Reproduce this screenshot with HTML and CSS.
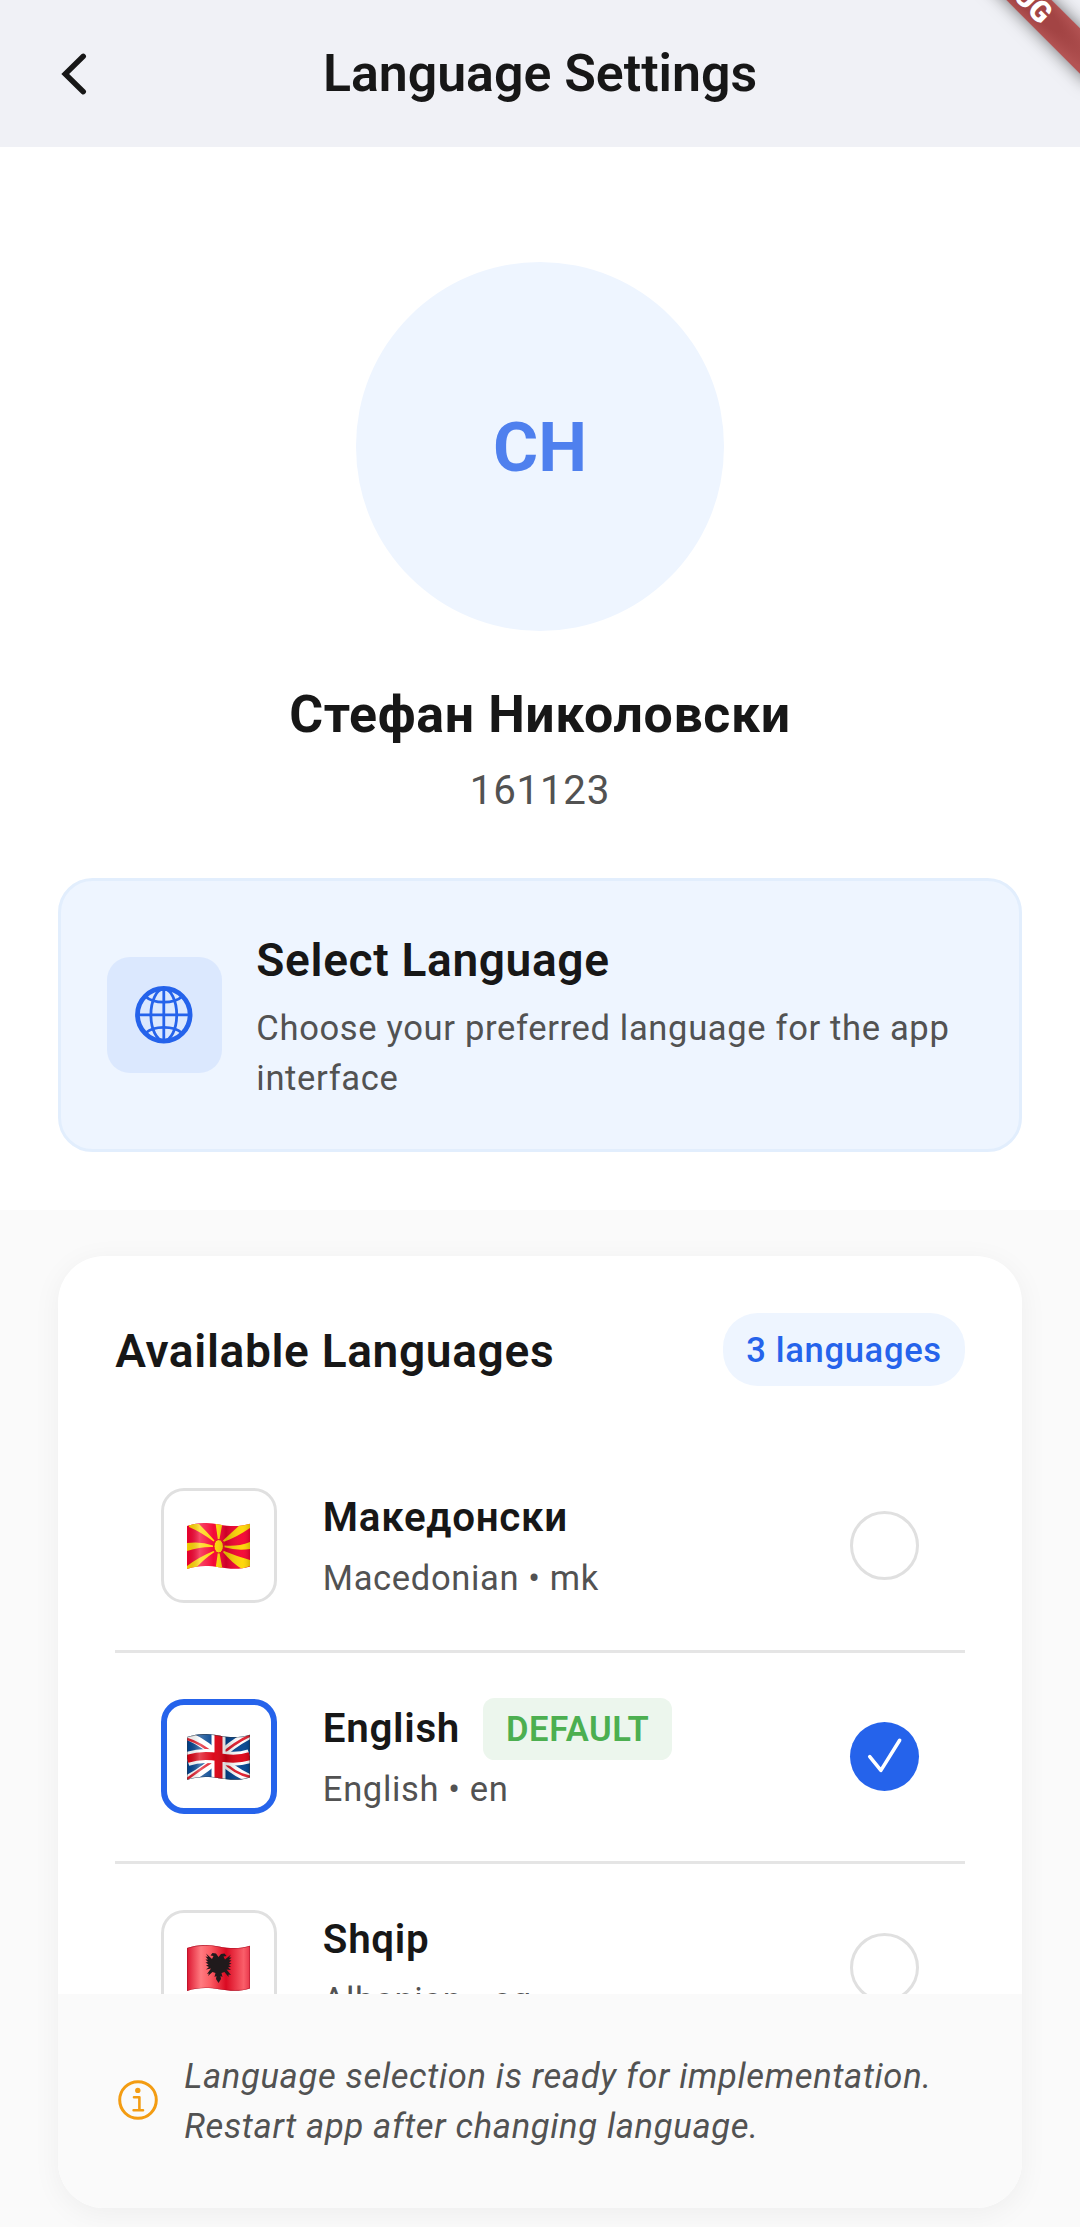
FILE: index.html
```html
<!DOCTYPE html>
<html lang="en">
<head>
<meta charset="utf-8">
<title>Language Settings</title>
<link rel="stylesheet" href="styles.css">
</head>
<body>
<div class="screen">
  <header class="app-bar">
    <svg class="back" viewBox="0 0 28 44"><path d="M23.300 4.300L5.200 22L23.300 39.700"/></svg>
    <h1 class="app-title">Language Settings</h1>
  </header>
  <div class="ribbon"><span class="ribbon-text">DEBUG</span></div>

  <section class="profile">
    <div class="avatar">CH</div>
    <h2 class="name">Стефан Николовски</h2>
    <p class="index-number">161123</p>
    <div class="intro">
      <div class="intro-icon">
        <svg class="globe" viewBox="0 0 58 58">
          <circle class="globe-ring" cx="29" cy="29" r="26.500"/>
          <path d="M29 3V55M3 29H55"/>
          <ellipse cx="29" cy="29" rx="13" ry="26"/>
          <path d="M10.500 10.500C19 18.200 39 18.200 47.500 10.500M10.500 47.500C19 39.800 39 39.800 47.500 47.500"/>
        </svg>
      </div>
      <div class="intro-copy">
        <h3 class="intro-title">Select Language</h3>
        <p class="intro-text">Choose your preferred language for the app interface</p>
      </div>
    </div>
  </section>

  <main class="content">
    <div class="card">
      <div class="card-head">
        <h3 class="card-title">Available Languages</h3>
        <span class="count">3 languages</span>
      </div>
      <div class="list">
        <div class="row">
          <div class="flag-box">
            <svg class="flag" viewBox="0 0 63 46">
              <defs>
                <clipPath id="wave"><path d="M0 3C12 -1 22 -.5 32 1.500S53 4 63 .8V43.500C53 47 42 46 32 44.300S12 42 0 46Z"/></clipPath>
                <linearGradient id="shade">
                  <stop offset="0" stop-color="#000" stop-opacity=".05"/>
                  <stop offset=".2" stop-color="#fff" stop-opacity=".28"/>
                  <stop offset=".42" stop-color="#fff" stop-opacity=".04"/>
                  <stop offset=".62" stop-color="#000" stop-opacity=".17"/>
                  <stop offset=".88" stop-color="#fff" stop-opacity=".05"/>
                  <stop offset="1" stop-color="#000" stop-opacity=".15"/>
                </linearGradient>
                <linearGradient id="crimson">
                  <stop offset="0" stop-color="#dc1530"/>
                  <stop offset=".22" stop-color="#ff7b80"/>
                  <stop offset=".38" stop-color="#fb5a62"/>
                  <stop offset=".62" stop-color="#da0a22"/>
                  <stop offset=".9" stop-color="#fa5f6a"/>
                  <stop offset="1" stop-color="#e8354a"/>
                </linearGradient>
              </defs>
              <g clip-path="url(#wave)">
                <rect width="63" height="46" fill="#f5002f"/>
                <g fill="#ffd500">
                  <path d="M28.500 0H35.500L32.500 16H30.800Z"/>
                  <path d="M28.500 46H35.500L32.500 30H30.800Z"/>
                  <path d="M0 20Q14 18 26 22.500V24Q14 23.500 0 28Z"/>
                  <path d="M63 19Q50 24 37.500 22.500V24.300Q50 28 63 26Z"/>
                  <path d="M2 1H12Q20 9 27.500 17.500L26.500 18.500Q14 9 2 4Z"/>
                  <path d="M63 1H54Q44 10 36 17.500L37 18.700Q50 14 63 5Z"/>
                  <path d="M0 46H8Q17 36 27.500 29L26.500 28Q12 34 0 43Z"/>
                  <path d="M63 43V37Q49 33 37 28L36 29Q45 40 55 46Z"/>
                  <ellipse cx="31.700" cy="23.300" rx="4.700" ry="6.700" stroke="#e60026"/>
                </g>
                <rect width="63" height="46" fill="url(#shade)"/>
              </g>
            </svg>
          </div>
          <div class="lang">
            <div class="lang-head"><span class="lang-name">Македонски</span></div>
            <div class="lang-meta">Macedonian • mk</div>
          </div>
          <div class="radio"></div>
        </div>
        <div class="row">
          <div class="flag-box flag-box-on">
            <svg class="flag" viewBox="0 0 63 46">
              <g clip-path="url(#wave)" fill="none">
                <rect width="63" height="46" fill="#00438f"/>
                <path d="M-1 1Q18 9 31.500 23T64 45M64 0Q46 9 31.500 23T-1 46" stroke="#fff" stroke-width="8.500"/>
                <path d="M0 5Q14 9 29 22M34 25Q47 40 64 43M64 1Q47 9 34 21M29 25Q15 34 0 45" stroke="#e01b2b" stroke-width="2.600"/>
                <path d="M31.500 0V46M0 25C12 21 22 21.500 32 23.300S53 25.500 63 22" stroke="#fff" stroke-width="14"/>
                <path d="M31.500 0V46M0 25C12 21 22 21.500 32 23.300S53 25.500 63 22" stroke="#dc0012" stroke-width="8"/>
                <rect width="63" height="46" fill="url(#shade)"/>
                <path d="M0 3C12 -1 22 -.5 32 1.500S53 4 63 .8V43.500C53 47 42 46 32 44.300S12 42 0 46Z" stroke="#333" stroke-opacity=".55" stroke-width="1.300"/>
              </g>
            </svg>
          </div>
          <div class="lang">
            <div class="lang-head"><span class="lang-name">English</span><span class="badge">DEFAULT</span></div>
            <div class="lang-meta">English • en</div>
          </div>
          <div class="radio radio-on">
            <svg class="check" viewBox="0 0 70 70"><path d="M20 35L31.300 49L50.300 18.500"/></svg>
          </div>
        </div>
        <div class="row">
          <div class="flag-box">
            <svg class="flag" viewBox="0 0 63 46">
              <g clip-path="url(#wave)">
                <rect width="63" height="46" fill="url(#crimson)"/>
                <path fill="#201a1c" d="M31.500 12L29 8.500L25.500 8L23.500 10.500L26.500 11L25 14L19 8.500L21 12L18.500 11.500L21 14.500L18.500 14.500L21 17L18.500 17.500L21.500 19.500L19 20.500L22 22L19 24.500L24 23.500L20 29L22 28.500L21 31L25.500 27L28.500 28L27.500 32L29.500 31L29 34L31.500 38L34 34L33.500 31L35.500 32L34.500 28L37.500 27L41.500 32L41.500 29.500L44 30L39.500 24.500L44 25L41 22.500L44 21.500L41.500 20L44.500 18.500L42 17.500L44.500 15.500L42 15L44.500 12.500L42 12.500L44 9.500L38 14.500L36.500 11.500L39.500 11L37.500 8.500L34 9Z"/>
                <path d="M0 3C12 -1 22 -.5 32 1.500S53 4 63 .8V43.500C53 47 42 46 32 44.300S12 42 0 46Z" fill="none" stroke="#a01024" stroke-opacity=".7" stroke-width="1.300"/>
              </g>
            </svg>
          </div>
          <div class="lang">
            <div class="lang-head"><span class="lang-name">Shqip</span></div>
            <div class="lang-meta">Albanian • sq</div>
          </div>
          <div class="radio"></div>
        </div>
      </div>
      <footer class="note">
        <svg class="info" viewBox="0 0 46 46">
          <circle class="info-ring" cx="23" cy="23" r="18.300"/>
          <circle class="info-dot" cx="22.800" cy="13.400" r="2.700"/>
          <path d="M19 20.300H24.400V33.200M18.600 33.200H28"/>
        </svg>
        <p class="note-text">Language selection is ready for implementation. Restart app after changing language.</p>
      </footer>
    </div>
  </main>
</div>
</body>
</html>
```
FILE: styles.css
```css
* { box-sizing: border-box; margin: 0; padding: 0; }
body { font-family: Roboto, "Noto Sans", sans-serif; color: #171717; background: #fafafa; }
svg { display: block; fill: none; }
.screen { position: relative; width: 1080px; height: 2227px; overflow: hidden; display: flex; flex-direction: column; }

.app-bar { height: 147px; flex: none; background: #f0f1f6; display: grid; grid-template-columns: 60px 1fr 60px; align-items: center; }
.back { width: 28px; height: 44px; margin-left: 59.500px; stroke: #171717; stroke-width: 5.4; stroke-linecap: round; stroke-linejoin: miter; }
.app-title { text-align: center; font-size: 51.84px; font-weight: 600; line-height: 60px; white-space: nowrap; }

.ribbon { position: absolute; left: 890px; top: -31px; width: 248px; height: 32px; transform: rotate(45deg); display: flex; align-items: center; justify-content: center; background: radial-gradient(ellipse 130px 19px at center, #a34444, #a34444 50%, #b35353); box-shadow: 0 0 17px rgba(0, 0, 0, .55); }
.ribbon-text { color: #fff; font-size: 29.4px; font-weight: 900; line-height: 32px; }

.profile { flex: none; height: 1062.6px; background: #fff; padding: 115.2px 57.6px 0; display: flex; flex-direction: column; align-items: center; }
.avatar { width: 368.6px; height: 368.6px; padding-top: 3px; border-radius: 50%; background: #eef5ff; color: #4f80ee; font-size: 69.12px; font-weight: 700; display: flex; align-items: center; justify-content: center; }
.name { margin-top: 48.500px; font-size: 51.84px; font-weight: 700; line-height: 72px; letter-spacing: .64px; }
.index-number { margin-top: 11px; font-size: 40.32px; line-height: 58px; letter-spacing: .72px; color: #525252; }
.intro { margin-top: 57.700px; width: 100%; height: 274px; display: flex; align-items: center; gap: 34.56px; padding: 0 46px; border: 3px solid #e2eefd; border-radius: 34.56px; background: #eef5ff; }
.intro-icon { flex: none; width: 115.2px; height: 115.2px; border-radius: 23px; background: #dbe8fe; display: flex; align-items: center; justify-content: center; }
.globe { width: 57.6px; height: 57.6px; stroke: #2563eb; stroke-width: 2.8; }
.globe-ring { stroke-width: 4.8; }
.intro-title { font-size: 46.08px; font-weight: 600; line-height: 66px; letter-spacing: .64px; margin-bottom: 10px; }
.intro-text { font-size: 34.56px; line-height: 50px; letter-spacing: .65px; color: #525252; }

.content { flex: 1; padding: 46px 57.6px 19px; }
.card { height: 952.400px; display: flex; flex-direction: column; background: #fff; border-radius: 46px; overflow: hidden; box-shadow: 0 5.76px 28.8px rgba(0, 0, 0, .05); }
.card-head { flex: none; height: 186.200px; padding: 57.6px 57.6px 0; display: flex; align-items: flex-start; justify-content: space-between; }
.card-title { font-size: 46.08px; font-weight: 600; line-height: 76px; letter-spacing: .65px; }
.count { height: 73px; line-height: 74px; padding: 0 23px; border-radius: 34.56px; background: #eef5ff; color: #2563eb; font-size: 34.56px; font-weight: 500; letter-spacing: .68px; }
.list { flex: 1; min-height: 0; overflow: hidden; padding: 0 57.6px; }
.row { height: 211px; border-bottom: 3px solid #e5e5e5; padding: 0 46px 0 46.200px; display: flex; align-items: center; }
.flag-box { flex: none; width: 115.2px; height: 115.2px; border: 3px solid #e0e0e0; border-radius: 23px; background: #fff; display: flex; align-items: center; justify-content: center; }
.flag-box-on { border: 6px solid #2563eb; }
.flag { width: 63px; height: 46px; }
.lang { flex: 1; margin-left: 46.300px; padding-top: .5px; }
.lang-head { height: 58px; display: flex; align-items: center; gap: 23px; }
.lang-name { font-size: 40.32px; font-weight: 600; line-height: 58px; letter-spacing: .68px; }
.badge { height: 61.500px; flex: none; line-height: 62px; padding: 0 23px; border-radius: 11.5px; background: #ecf6ed; color: #4caf50; font-size: 34.56px; font-weight: 600; letter-spacing: .6px; }
.lang-meta { margin-top: 6.500px; font-size: 34.56px; line-height: 50px; letter-spacing: .64px; color: #525252; }
.radio { flex: none; width: 69.12px; height: 69.12px; border: 3px solid #e0e0e0; border-radius: 50%; }
.radio-on { border: 0; background: #2563eb; }
.check { width: 69.12px; height: 69.12px; stroke: #fff; stroke-width: 3.6; stroke-linecap: round; stroke-linejoin: round; }

.note { flex: none; height: 213.600px; background: #fafafa; padding: 0 57.6px; display: flex; align-items: center; gap: 23px; }
.info { flex: none; width: 46px; height: 46px; margin-top: -2px; stroke: #f39c12; stroke-width: 2.600; stroke-linecap: round; stroke-linejoin: round; }
.info-ring { stroke-width: 3; }
.info-dot { stroke: none; fill: #f39c12; }
.note-text { font-size: 34.56px; font-style: italic; line-height: 50px; letter-spacing: .66px; color: #525252; }
```
